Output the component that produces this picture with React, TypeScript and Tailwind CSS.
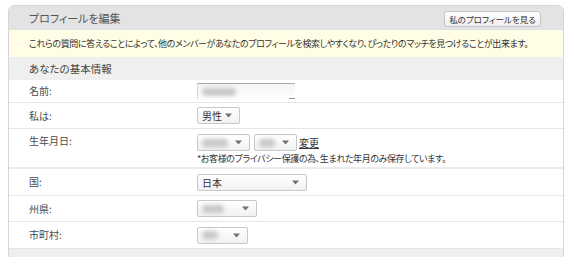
const font = "font-['Noto_Sans_CJK_JP','Noto_Sans',sans-serif] [font-feature-settings:'palt']";

const Blur = ({ w }: { w: number }) => (
  <span
    className="inline-block h-[8px] rounded-full bg-[#c6c6c6] blur-[2px]"
    style={{ width: w }}
  />
);

const Arrow = () => (
  <svg width="7" height="5" viewBox="0 0 7 5" className="shrink-0">
    <path d="M0 0.5h7L3.5 4.5z" fill="#707070" />
  </svg>
);

const Select = ({
  width,
  children,
}: {
  width: string;
  children: React.ReactNode;
}) => (
  <div
    className={`${width} h-[17px] flex items-center justify-between pl-[4px] pr-[7px] border border-[#c8c8c8] rounded-[2px] bg-gradient-to-b from-white to-[#f1f1f1] text-[10px] text-[#333]`}
  >
    <span className="flex items-center">{children}</span>
    <Arrow />
  </div>
);

const Row = ({
  label,
  height,
  children,
  thick,
  top,
}: {
  label: string;
  height: string;
  children: React.ReactNode;
  thick?: boolean;
  top?: boolean;
}) => (
  <div
    className={`flex ${top ? "items-start pt-[7px]" : "items-center"} ${height} ${
      thick ? "border-b-2 border-[#ebebeb]" : "border-b border-[#e6e6e6]"
    } pl-[20px]`}
  >
    <div className="w-[168px] text-[10px] text-[#4a4a4a] leading-none">{label}</div>
    <div className="flex-1">{children}</div>
  </div>
);

export default function App() {
  return (
    <div className={`w-[567px] h-[257px] overflow-hidden bg-white pt-[5px] pl-[8px] ${font}`}>
      <div className="w-[556px] border border-[#d6d6d6] rounded-t-[6px] overflow-hidden">
        {/* header */}
        <div className="h-[24px] bg-[#e3e3e3] flex items-center justify-between pl-[20px] pr-[22px]">
          <span className="text-[11px] text-[#555] leading-none">プロフィールを編集</span>
          <button className="h-[16px] w-[97px] mt-[2px] rounded-[3px] border border-[#c4c4c4] bg-gradient-to-b from-white to-[#f0f0f0] text-[8.5px] text-[#333] leading-none">
            私のプロフィールを見る
          </button>
        </div>

        {/* info band */}
        <div className="h-[27px] bg-[#fffde6] flex items-center pl-[20px] text-[9px] text-[#333] tracking-[-0.4px] whitespace-nowrap">
          これらの質問に答えることによって、他のメンバーがあなたのプロフィールを検索しやすくなり、ぴったりのマッチを見つけることが出来ます。
        </div>

        {/* section */}
        <div className="h-[23px] bg-[#efefef] flex items-center pl-[20px] text-[10.5px] text-[#444]">
          あなたの基本情報
        </div>

        <Row label="名前:" height="h-[23px]">
          <div className="relative w-[98px] h-[16px] border-t border-[#a8a8a8] border-l border-l-[#d8d8d8] bg-gradient-to-b from-[#f4f4f4] to-white flex items-center pl-[4px]">
            <Blur w={34} />
            <span className="absolute right-0 bottom-0 w-[6px] h-px bg-[#999]" />
          </div>
        </Row>

        <Row label="私は:" height="h-[26px]">
          <Select width="w-[43px]">男性</Select>
        </Row>

        <Row label="生年月日:" height="h-[40px]" thick top>
          <div className="-mt-[2px]">
            <div className="flex items-center gap-[4px]">
              <Select width="w-[53px]">
                <Blur w={26} />
              </Select>
              <Select width="w-[43px]">
                <Blur w={16} />
              </Select>
              <span className="text-[10px] text-[#333] underline leading-none -ml-[2px]">変更</span>
            </div>
            <div className="text-[9px] text-[#333] leading-none mt-[3px] tracking-[-0.4px] whitespace-nowrap">
              *お客様のプライバシー保護の為、生まれた年月のみ保存しています。
            </div>
          </div>
        </Row>

        <Row label="国:" height="h-[27px]">
          <Select width="w-[110px]">日本</Select>
        </Row>

        <Row label="州県:" height="h-[26px]">
          <Select width="w-[60px]">
            <Blur w={22} />
          </Select>
        </Row>

        <Row label="市町村:" height="h-[27px]">
          <Select width="w-[51px]">
            <Blur w={16} />
          </Select>
        </Row>

        <div className="h-[10px] bg-[#efefef]" />
      </div>
    </div>
  );
}
